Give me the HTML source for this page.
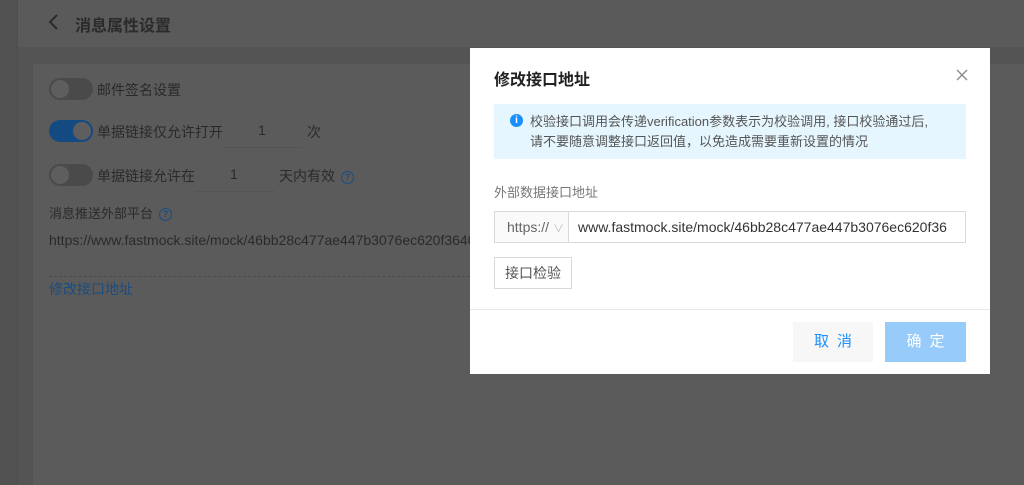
<!DOCTYPE html>
<html><head><meta charset="utf-8"><style>
*{margin:0;padding:0;box-sizing:border-box}
body{width:1024px;height:485px;overflow:hidden;background:#555;font-family:"Liberation Sans","Noto Sans CJK SC",sans-serif;position:relative}
.side{position:absolute;left:0;top:0;width:18px;height:485px;background:#525252;border-right:1px solid #4d4d4d}
.hdr{position:absolute;left:18px;top:0;right:0;height:47px;background:#5a5a5a}
.hdr .t{position:absolute;left:57px;top:12px;font-size:16px;font-weight:bold;color:#2a2a2a}
.strip{position:absolute;left:18px;top:47px;right:0;height:438px;background:#545454}
.card{position:absolute;left:33px;top:64px;right:0;height:421px;background:#5b5b5b}
.tg{position:absolute;left:49px;width:44px;height:22px;border-radius:11px;background:#4a4a4a}
.tg::after{content:"";position:absolute;top:2px;left:2px;width:18px;height:18px;border-radius:50%;background:#5e5e5e}
.tg.on{background:#134a82}.tg.on::after{left:24px}
.tx{position:absolute;font-size:14px;color:#2a2a2a}
.q{display:inline-block;width:13px;height:13px;border:1.5px solid #1a4d80;border-radius:50%;font-size:9px;color:#1a4d80;text-align:center;line-height:10px;font-weight:bold;vertical-align:1px;margin-left:6px}
.ul{position:absolute;height:1px;background:#555}
.modal{position:absolute;left:470px;top:48px;width:520px;height:326px;background:#fff}
</style></head><body>
<div class="side"></div>
<div class="hdr"><svg style="position:absolute;left:30px;top:14px" width="12" height="16"><path d="M9 1L2 8l7 7" fill="none" stroke="#2a2a2a" stroke-width="2"/></svg><div class="t">消息属性设置</div></div>
<div class="strip"></div>
<div class="card"></div>
<div class="tg" style="top:78px"></div><div class="tx" style="left:97px;top:80px">邮件签名设置</div>
<div class="tg on" style="top:120px"></div><div class="tx" style="left:97px;top:122px">单据链接仅允许打开</div>
<div class="tx" style="left:258px;top:122px">1</div><div class="ul" style="left:223px;top:147px;width:80px"></div>
<div class="tx" style="left:307px;top:122px">次</div>
<div class="tg" style="top:164px"></div><div class="tx" style="left:97px;top:166px">单据链接允许在</div>
<div class="tx" style="left:230px;top:166px">1</div><div class="ul" style="left:195px;top:191px;width:80px"></div>
<div class="tx" style="left:279px;top:166px">天内有效<span class="q">?</span></div>
<div class="tx" style="left:49px;top:203px;font-size:13px">消息推送外部平台<span class="q">?</span></div>
<div class="tx" style="left:49px;top:232px;white-space:nowrap">https://www.fastmock.site/mock/46bb28c477ae447b3076ec620f3640</div>
<div style="position:absolute;left:49px;top:276px;width:421px;border-top:1px dashed #4c4c4c"></div>
<div class="tx" style="left:49px;top:279px;color:#1a4d80">修改接口地址</div>
<div class="modal">
 <div style="position:absolute;left:24px;top:18px;font-size:16px;font-weight:bold;color:#222">修改接口地址</div>
 <svg style="position:absolute;left:486px;top:21px" width="12" height="12"><path d="M1 1l10 10M11 1L1 11" stroke="#888" stroke-width="1.3"/></svg>
 <div style="position:absolute;left:24px;top:56px;width:472px;height:55px;background:#e6f6fe"></div>
 <div style="position:absolute;left:40px;top:66px;width:13px;height:13px;border-radius:50%;background:#1890ff;color:#fff;font-size:10px;text-align:center;line-height:13px;font-weight:bold">i</div>
 <div style="position:absolute;left:60px;top:64px;font-size:13px;color:#555;line-height:20px">校验接口调用会传递verification参数表示为校验调用, 接口校验通过后,<br>请不要随意调整接口返回值，以免造成需要重新设置的情况</div>
 <div style="position:absolute;left:24px;top:134px;font-size:13px;color:#777">外部数据接口地址</div>
 <div style="position:absolute;left:24px;top:163px;width:472px;height:32px;border:1px solid #d9d9d9"></div>
 <div style="position:absolute;left:25px;top:164px;width:74px;height:30px;background:#fafafa;border-right:1px solid #d9d9d9;font-size:14px;color:#666;padding:7px 0 0 12px">https://<span style="color:#bbb;font-size:11px;margin-left:4px">∨</span></div>
 <div style="position:absolute;left:108px;top:171px;font-size:14px;color:#333;white-space:nowrap">www.fastmock.site/mock/46bb28c477ae447b3076ec620f36</div>
 <div style="position:absolute;left:24px;top:209px;width:78px;height:32px;border:1px solid #d9d9d9;font-size:14px;color:#555;text-align:center;line-height:30px">接口检验</div>
 <div style="position:absolute;left:0;top:261px;width:520px;height:1px;background:#e8e8e8"></div>
 <div style="position:absolute;left:323px;top:274px;width:80px;height:40px;background:#f7f7f7;color:#1890ff;font-size:15px;text-align:center;line-height:40px;letter-spacing:8px;padding-left:8px">取消</div>
 <div style="position:absolute;left:415px;top:274px;width:81px;height:40px;background:#96cbfa;color:#fff;font-size:15px;text-align:center;line-height:40px;letter-spacing:8px;padding-left:8px">确定</div>
</div>
</body></html>
